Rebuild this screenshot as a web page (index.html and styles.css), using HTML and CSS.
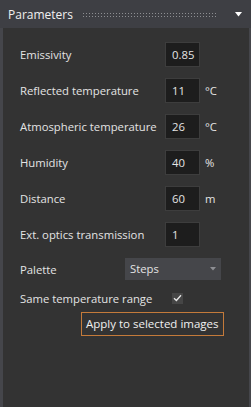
FILE: index.html
```html
<!DOCTYPE html>
<html>
<head>
<meta charset="utf-8">
<link rel="stylesheet" href="styles.css">
</head>
<body>
<div class="panel">
  <div class="header">
    <span class="title">Parameters</span>
    <span class="grip"></span>
    <svg class="arrow" width="7" height="5" viewBox="0 0 7 5"><path d="M0 0H7L3.5 4.5Z" fill="#ffffff"/></svg>
  </div>
  <div class="body">
    <div class="row">
      <span class="label">Emissivity</span>
      <span class="field">0.85</span>
      <span class="unit"></span>
    </div>
    <div class="row">
      <span class="label">Reflected temperature</span>
      <span class="field">11</span>
      <span class="unit">°C</span>
    </div>
    <div class="row">
      <span class="label">Atmospheric temperature</span>
      <span class="field">26</span>
      <span class="unit">°C</span>
    </div>
    <div class="row">
      <span class="label">Humidity</span>
      <span class="field">40</span>
      <span class="unit">%</span>
    </div>
    <div class="row">
      <span class="label">Distance</span>
      <span class="field">60</span>
      <span class="unit">m</span>
    </div>
    <div class="row">
      <span class="label">Ext. optics transmission</span>
      <span class="field">1</span>
      <span class="unit"></span>
    </div>
    <div class="row palette-row">
      <span class="label short">Palette</span>
      <span class="select">Steps
        <svg class="sel-arrow" width="6" height="4" viewBox="0 0 6 4"><path d="M0 0H6L3 3.5Z" fill="#8e8f94"/></svg>
      </span>
    </div>
    <div class="row check-row">
      <span class="label">Same temperature range</span>
      <span class="check">
        <svg width="9" height="8" viewBox="0 0 9 8"><path d="M1 4.2L3.4 6.5L8 1.2" fill="none" stroke="#e8e8e8" stroke-width="1.3"/></svg>
      </span>
    </div>
    <div class="btn-row">
      <span class="btn">Apply to selected images</span>
    </div>
  </div>
</div>
</body>
</html>
```
FILE: styles.css
```css
html, body {
  margin: 0;
  padding: 0;
  background: #333333;
  width: 251px;
  height: 407px;
  overflow: hidden;
}
.panel {
  width: 251px;
  height: 407px;
  display: flex;
  flex-direction: column;
  font-family: "Open Sans", "Noto Sans", sans-serif;
  font-size: 11.3px;
  color: #e4e4e4;
}
.header {
  height: 28px;
  background: #3e3f44;
  display: flex;
  align-items: center;
  padding-left: 8px;
  box-sizing: border-box;
}
.title {
  font-size: 12px;
  color: #f0f0f0;
  width: 74px;
}
.grip {
  width: 135px;
  height: 6px;
  margin-top: 2px;
  background-image: radial-gradient(circle, #8d8e92 0.7px, transparent 0.8px);
  background-size: 3px 3px;
  background-position: 0 0;
}
.arrow {
  margin-left: 18px;
  margin-top: 1px;
}
.body {
  flex: 1;
  background: #333333;
  border-left: 3px solid #45464b;
  border-right: 2px solid #45464b;
  padding: 14px 0 0 17px;
  display: flex;
  flex-direction: column;
  gap: 11px;
}
.row {
  display: flex;
  align-items: center;
  height: 25px;
}
.label {
  width: 145px;
  white-space: nowrap;
}
.field {
  width: 35px;
  height: 25px;
  box-sizing: border-box;
  background: #1d1d1d;
  border: 1px solid #3d3d3d;
  padding-left: 6px;
  line-height: 23px;
}
.unit {
  margin-left: 5px;
}
.palette-row {
  height: 22px;
}
.label.short {
  width: 105px;
}
.select {
  width: 96px;
  height: 22px;
  box-sizing: border-box;
  background: #45464a;
  padding-left: 5px;
  line-height: 22px;
  display: flex;
  align-items: center;
  justify-content: space-between;
  padding-right: 5px;
}
.check-row {
  height: 18px;
  margin-top: -2px;
}
.label + .check {
  margin-left: 7px;
}
.check {
  width: 11px;
  height: 11px;
  background: #464646;
  display: flex;
  align-items: center;
  justify-content: center;
}
.btn-row {
  padding-left: 61px;
  margin-top: -6px;
}
.btn {
  display: inline-block;
  height: 24px;
  box-sizing: border-box;
  border: 1px solid #c47a3a;
  padding: 0 4px;
  line-height: 22px;
  color: #f0f0f0;
  font-size: 11.5px;
}
```
